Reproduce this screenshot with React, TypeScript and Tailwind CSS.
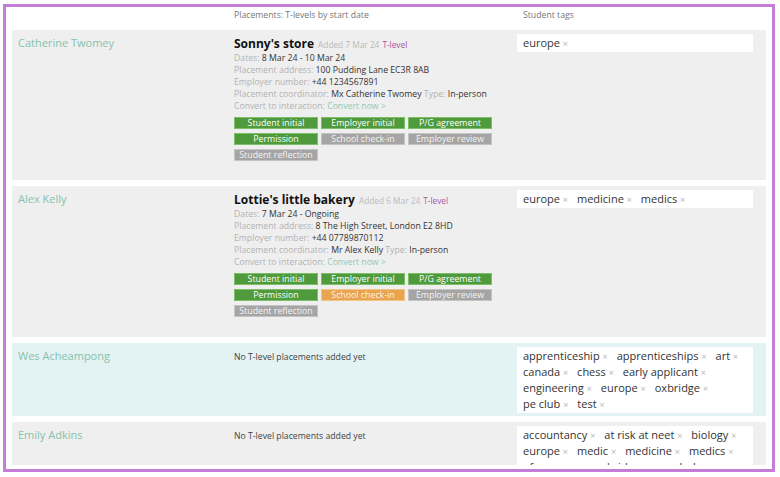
import React from "react";

type Btn = { label: string; c: "g" | "y" | "o" };

const btnCls: Record<string, string> = {
  g: "bg-[#4e9a3c] border-[#7cbf67] text-white",
  y: "bg-[#a5a5a5] border-[#c4c4c4] text-[#f4f4f4]",
  o: "bg-[#e9a450] border-[#f3c48a] text-[#fff3e0]",
};

function Buttons({ items }: { items: Btn[] }) {
  return (
    <div className="grid grid-cols-[84px_84px_84px] gap-x-[3px] gap-y-[4px] mt-[5px]">
      {items.map((b) => (
        <div
          key={b.label}
          className={`h-[12px] border text-[8.8px] leading-[10px] text-center ${btnCls[b.c]}`}
        >
          {b.label}
        </div>
      ))}
    </div>
  );
}

function Line({ label, value, link }: { label: string; value?: string; link?: string }) {
  return (
    <div className="h-[12px] text-[8.7px] leading-[12px] text-[#b3b3b3] whitespace-nowrap">
      {label}{" "}
      {value && <span className="text-[#333] font-medium">{value}</span>}
      {link && <span className="text-[#8ecab4]">{link}</span>}
    </div>
  );
}

function Tag({ t }: { t: string }) {
  return (
    <span className="mr-[9px] whitespace-nowrap">
      {t} <span className="text-[#b8b8b8] text-[9px]">×</span>
    </span>
  );
}

function Tags({ lines }: { lines: string[][] }) {
  return (
    <div className="bg-white px-[6px] py-[1px] text-[11px] leading-[16px] text-[#333]">
      {lines.map((l, i) => (
        <div key={i} className="whitespace-nowrap h-[16px]">
          {l.map((t) => (
            <Tag key={t} t={t} />
          ))}
        </div>
      ))}
    </div>
  );
}

function Placement({
  name,
  added,
  dates,
  address,
  phone,
  coord,
  buttons,
}: {
  name: string;
  added: string;
  dates: string;
  address: string;
  phone: string;
  coord: string;
  buttons: Btn[];
}) {
  return (
    <div className="pt-[1px]">
      <div className="h-[14px] flex items-baseline gap-[4px] whitespace-nowrap leading-[14px]">
        <span className="text-[12px] font-bold text-[#111]">{name}</span>
        <span className="text-[8.3px] text-[#bababa]">Added {added}</span>
        <span className="text-[8.3px] text-[#a6599c] -ml-[1px]">T-level</span>
      </div>
      <div className="mt-[1px]">
        <Line label="Dates:" value={dates} />
        <Line label="Placement address:" value={address} />
        <Line label="Employer number:" value={phone} />
        <div className="h-[12px] text-[8.7px] leading-[12px] text-[#b3b3b3] whitespace-nowrap">
          Placement coordinator: <span className="text-[#333] font-medium">{coord}</span> Type:{" "}
          <span className="text-[#333] font-medium">In-person</span>
        </div>
        <Line label="Convert to interaction:" link="Convert now >" />
      </div>
      <Buttons items={buttons} />
    </div>
  );
}

function Row({
  name,
  bg,
  h,
  children,
  tags,
}: {
  name: string;
  bg: string;
  h: string;
  children: React.ReactNode;
  tags: string[][];
}) {
  return (
    <div className={`grid grid-cols-[222px_283px_236px] shrink-0 ${bg} ${h}`}>
      <div className="pl-[6px] pt-[5px] text-[11px] leading-[16px] text-[#86c2ad]">{name}</div>
      <div className="pt-[6px]">{children}</div>
      <div className="pt-[4px]">
        <Tags lines={tags} />
      </div>
    </div>
  );
}

export default function App() {
  return (
    <div className="w-[780px] h-[477px] bg-white pt-[4px] pl-[3px] font-['Open_Sans',sans-serif]">
      <div className="w-[772px] h-[468px] border-[3px] border-[#c57dd7] px-[6px] pb-[4px] flex flex-col">
        <div className="h-[23px] shrink-0 grid grid-cols-[222px_289px_1fr] text-[8.7px] text-[#777] leading-[14px] pt-[1px]">
          <div />
          <div>Placements: T-levels by start date</div>
          <div>Student tags</div>
        </div>
        <div className="flex-1 min-h-0 overflow-hidden flex flex-col gap-[6px]">
          <Row name="Catherine Twomey" bg="bg-[#efefef]" h="h-[150px]" tags={[["europe"]]}>
            <Placement
              name="Sonny's store"
              added="7 Mar 24"
              dates="8 Mar 24 - 10 Mar 24"
              address="100 Pudding Lane EC3R 8AB"
              phone="+44 1234567891"
              coord="Mx Catherine Twomey"
              buttons={[
                { label: "Student initial", c: "g" },
                { label: "Employer initial", c: "g" },
                { label: "P/G agreement", c: "g" },
                { label: "Permission", c: "g" },
                { label: "School check-in", c: "y" },
                { label: "Employer review", c: "y" },
                { label: "Student reflection", c: "y" },
              ]}
            />
          </Row>
          <Row name="Alex Kelly" bg="bg-[#efefef]" h="h-[151px]" tags={[["europe", "medicine", "medics"]]}>
            <Placement
              name="Lottie's little bakery"
              added="6 Mar 24"
              dates="7 Mar 24 - Ongoing"
              address="8 The High Street, London E2 8HD"
              phone="+44 07789870112"
              coord="Mr Alex Kelly"
              buttons={[
                { label: "Student initial", c: "g" },
                { label: "Employer initial", c: "g" },
                { label: "P/G agreement", c: "g" },
                { label: "Permission", c: "g" },
                { label: "School check-in", c: "o" },
                { label: "Employer review", c: "y" },
                { label: "Student reflection", c: "y" },
              ]}
            />
          </Row>
          <Row
            name="Wes Acheampong"
            bg="bg-[#e3f2f3]"
            h="h-[73px]"
            tags={[
              ["apprenticeship", "apprenticeships", "art"],
              ["canada", "chess", "early applicant"],
              ["engineering", "europe", "oxbridge"],
              ["pe club", "test"],
            ]}
          >
            <div className="text-[8.7px] leading-[14px] text-[#444] pt-[1px]">No T-level placements added yet</div>
          </Row>
          <Row
            name="Emily Adkins"
            bg="bg-[#efefef]"
            h="h-[80px]"
            tags={[
              ["accountancy", "at risk at neet", "biology"],
              ["europe", "medic", "medicine", "medics"],
              ["of concern", "oxbridge", "psychology"],
            ]}
          >
            <div className="text-[8.7px] leading-[14px] text-[#444] pt-[1px]">No T-level placements added yet</div>
          </Row>
        </div>
      </div>
    </div>
  );
}
